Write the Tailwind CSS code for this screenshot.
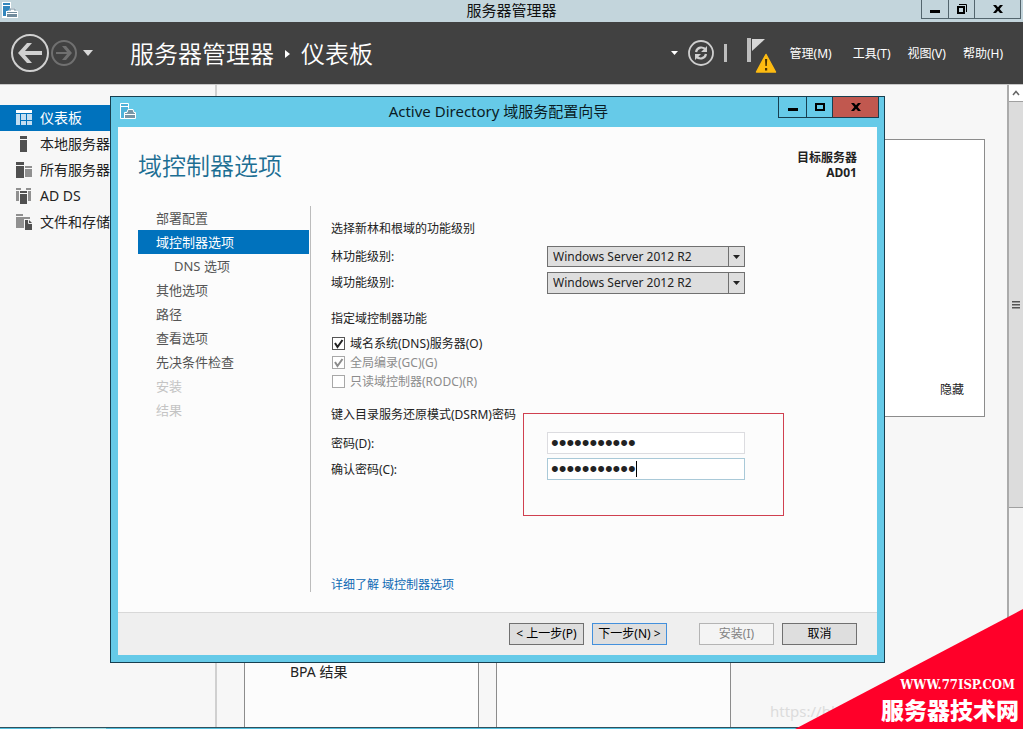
<!DOCTYPE html>
<html lang="zh-CN">
<head>
<meta charset="utf-8">
<meta name="viewport" content="width=device-width, initial-scale=1">
<title>服务器管理器</title>
<script src="https://cdn.jsdelivr.net/npm/@tailwindcss/browser@4"></script>
</head>
<body class="relative flex h-screen flex-col overflow-hidden bg-[#f7f7f7] font-['Noto_Sans','Noto_Sans_CJK_SC',sans-serif] text-xs text-[#222]">

<!-- Window title bar -->
<header class="grid h-[22px] shrink-0 grid-cols-[1fr_auto_1fr] bg-[#c3d5dc]">
  <svg class="ml-0.5 mt-0.5 size-4" viewBox="0 0 16 16" aria-hidden="true">
    <path d="M0 0h9v16H0z" fill="#fff"/><path d="M1 1h7v2H1zM1 4h7v4L5 9v5H1z" fill="#3286bd"/>
    <path d="M4 9h3l1-3h5l1 3h2v7H4z" fill="#fff"/><path d="M5 10h10v1H5zM5 12h10v3H5z" fill="#718b9c"/><path d="M8 9V7h5v2" stroke="#718b9c" fill="none"/>
  </svg>
  <h1 class="text-[15px] leading-[20px] text-[#111]">服务器管理器</h1>
  <div class="mr-0.5 flex h-[19px] justify-self-end border border-t-0 border-[#53656d]">
    <button type="button" aria-label="最小化" class="flex w-[27px] items-center justify-center border-r border-[#53656d]"><svg class="h-3 w-3" viewBox="0 0 12 12"><path d="M1 7h10v3H1z"/></svg></button>
    <button type="button" aria-label="还原" class="flex w-[26px] items-center justify-center border-r border-[#53656d]"><svg class="h-3 w-3" viewBox="0 0 12 12"><path d="M2 4h6v6H2z" fill="none" stroke="#000" stroke-width="2"/><path d="M3 1.500h7.500V9" fill="none" stroke="#000"/></svg></button>
    <button type="button" aria-label="关闭" class="flex w-[45px] items-center justify-center"><svg class="h-2.5 w-2.5" viewBox="0 0 10 10"><path d="M0 1h3l2 2.300l2-2.300h3L6.700 5L10 9H7L5 6.700L3 9H0l3.300-4z"/></svg></button>
  </div>
</header>

<!-- Command bar -->
<nav class="flex h-[62px] shrink-0 items-center bg-[#414141] text-white" aria-label="命令栏">
  <button type="button" aria-label="后退" class="ml-2.5"><svg class="size-10" viewBox="0 0 40 40"><circle cx="20" cy="20" r="18" fill="none" stroke="#d0d0d0" stroke-width="2"/><path d="M8 20l9-10h5l-7 8h17v4H15l7 8h-5z" fill="#d0d0d0"/></svg></button>
  <button type="button" aria-label="前进"><svg class="size-7" viewBox="0 0 28 28"><circle cx="14" cy="14" r="12" fill="none" stroke="#707070" stroke-width="2"/><path d="M22 14l-6-7h-4l5 6H6v2h11l-5 6h4z" fill="#707070"/></svg></button>
  <button type="button" aria-label="历史记录" class="ml-1"><svg class="h-[6px] w-3" viewBox="0 0 12 6"><path d="M1 0h10L6 6z" fill="#d8d8d8"/></svg></button>
  <ol class="ml-9 mt-0.5 flex flex-1 items-center text-[24px] font-[350] leading-8">
    <li>服务器管理器</li>
    <li aria-hidden="true" class="mx-[11px]"><svg class="h-2 w-[5px]" viewBox="0 0 5 8"><path d="M0 0l5 4l-5 4z" fill="#fff"/></svg></li>
    <li>仪表板</li>
  </ol>
  <button type="button" aria-label="更多"><svg class="h-1 w-[7px]" viewBox="0 0 7 4"><path d="M0 0h7L3.500 4z" fill="#fff"/></svg></button>
  <button type="button" aria-label="刷新" class="ml-2.5"><svg class="size-[26px]" viewBox="0 0 26 26"><circle cx="13" cy="13" r="12" fill="none" stroke="#cfcfcf" stroke-width="1.800"/><g fill="none" stroke="#cfcfcf" stroke-width="2.200"><path d="M8 12c1-5 7-6 10-2M18 14c-1 5-7 6-10 2"/></g><path d="M19 6v6h-6zM7 20v-6h6z" fill="#cfcfcf"/></svg></button>
  <span class="ml-[10px] h-[18px] w-[3px] bg-[#bdbdbd]"></span>
  <button type="button" aria-label="通知" class="ml-5 mt-1.5"><svg class="h-9 w-[30px]" viewBox="0 0 30 36"><path d="M0 0h4v24H0z" fill="#bdbdbd"/><path d="M5 1h13L5 13z" fill="#d6d6d6"/><path d="M19 16.500L28.500 34h-19z" fill="#fdbb11" stroke="#fdbb11" stroke-width="1.500" stroke-linejoin="round"/><path d="M18 21h2.200l-.4 7h-1.400zM18 30h2.200v2.500H18z" fill="#4a3200"/></svg></button>
  <div class="ml-[13px] mr-5 mt-0.5 flex gap-[17px] text-xs">
    <button type="button" class="mr-1">管理(M)</button>
    <button type="button">工具(T)</button>
    <button type="button">视图(V)</button>
    <button type="button">帮助(H)</button>
  </div>
</nav>

<!-- Dashboard behind the wizard -->
<main class="flex min-h-0 flex-1 border-t border-[#c8c8c8]">
  <aside class="w-[217px] shrink-0 border-r-2 border-[#d0d0d0] pt-5">
    <ul class="text-sm leading-[26px]">
      <li><a href="#" class="flex h-[26px] items-center gap-2 bg-[#0072bd] pl-4 text-white"><svg class="size-4" viewBox="0 0 16 16"><path d="M0 0h16v3H0z" fill="#fff"/><path d="M0 4h4v11H0zM5 4h5v6H5zM11 4h5v6h-5zM5 11h5v4H5zM11 11h5v4h-5z" fill="#c4def1"/></svg>仪表板</a></li>
      <li><a href="#" class="flex h-[26px] items-center gap-2 pl-4"><svg class="size-4" viewBox="0 0 16 16"><path d="M4 0h7v3H4zM4 4h7v12H4z" fill="#505050"/></svg>本地服务器</a></li>
      <li><a href="#" class="flex h-[26px] items-center gap-2 pl-4"><svg class="size-4" viewBox="0 0 16 16"><path d="M0 0h8v3H0zM0 4h8v12H0z" fill="#505050"/><path d="M9 4h7v2H9zM9 7h7v8H9z" fill="#909090"/></svg>所有服务器</a></li>
      <li><a href="#" class="flex h-[26px] items-center gap-2 pl-4"><svg class="size-4" viewBox="0 0 16 16"><path d="M0 0h5v2H0zM0 3h3v10H0zM10 0h5v2h-5zM12 3h3v10h-3z" fill="#909090"/><path d="M4 3h7v2H4zM4 6h7v10H4z" fill="#505050"/></svg>AD DS</a></li>
      <li><a href="#" class="flex h-[26px] items-center gap-2 pl-4"><svg class="size-4" viewBox="0 0 16 16"><path d="M0 0h7v2H0zM0 3h14v2H8v9H0z" fill="#909090"/><path d="M9 6h4l3 3v7H9z" fill="#505050"/><path d="M12.500 6v3.500H16" fill="none" stroke="#eee"/></svg>文件和存储服务</a></li>
    </ul>
  </aside>
  <section class="flex min-w-0 flex-1 flex-col pl-[27px] pr-[22px] pt-[54px]">
    <div class="flex h-[278px] shrink-0 items-end justify-end border border-[#8c8c8c] bg-white px-5 pb-[18px]">
      <button type="button">隐藏</button>
    </div>
    <div class="mt-8 grid min-h-0 flex-1 grid-cols-[235px_235px] gap-[17px]">
      <article class="flex flex-col border border-b-0 border-[#8c8c8c] bg-[#fcfcfc] pl-[45px] pt-[212px] text-sm leading-5"><h2>BPA 结果</h2></article>
      <article class="border border-b-0 border-[#8c8c8c] bg-[#fcfcfc]"></article>
    </div>
  </section>
  <div class="flex w-4 shrink-0 flex-col border-l-2 border-[#ababab] bg-[#f2f2f2]" aria-hidden="true">
    <div class="flex h-4 items-center justify-center bg-white"><svg class="h-2 w-2" viewBox="0 0 8 8"><path d="M1 6l3-3.500L7 6" fill="none" stroke="#666" stroke-width="1.500"/></svg></div>
    <div class="flex h-[407px] items-center justify-center border-y border-[#a0a0a0] bg-[#dcdcdc]"><svg class="h-2 w-2" viewBox="0 0 8 8"><path d="M0 0h8v1.500H0zM0 3h8v1.500H0zM0 6h8v1.500H0z" fill="#555"/></svg></div>
  </div>
</main>
<div class="h-0.5 shrink-0 border-t border-[#31505c] bg-[#55c0de]"><div class="ml-[51px] h-full w-[55px] bg-[#9fe0e8]"></div></div>

<!-- Site badge -->
<p class="absolute bottom-2 left-[770px] text-[15px] leading-5 text-[#dcdcdc]">https://bl</p>
<div class="absolute bottom-0 right-0 flex h-[120px] w-[228px] flex-col items-end justify-end bg-[#ff0029] text-white [clip-path:polygon(100%_0,100%_100%,0_100%)]">
  <span class="mr-2 font-['DejaVu_Serif_Condensed','DejaVu_Serif',serif] text-[13px] font-bold leading-4">WWW.77ISP.COM</span>
  <span class="mr-1 pb-0.5 text-[23px] font-black leading-[34px]">服务器技术网</span>
</div>

<!-- Wizard -->
<div role="dialog" aria-labelledby="wizard-title" class="absolute left-[110px] right-[138px] top-24 border border-[#173f50] bg-[#66cae8] px-[7px] pb-[7px]">
  <div class="-mr-0.5 grid h-[30px] grid-cols-[1fr_auto_1fr]">
    <svg class="ml-0.5 mt-1.5 size-4" viewBox="0 0 16 16" aria-hidden="true">
      <path d="M.5.500h8v5M.5.500v15H5M1 3.500h7" fill="none" stroke="#fff"/><path d="M1 1h7v2H1zM1 4h7v4L4 9v6H1z" fill="#4fb2da"/>
      <path d="M4.500 15.500v-6H7L8 6.500h5l1 3h1.500v6z" fill="#7795a5" stroke="#fff"/><path d="M5 11.500h10" stroke="#fff"/>
    </svg>
    <h2 id="wizard-title" class="text-[15px] leading-[28px] text-[#0a1c25]">Active Directory 域服务配置向导</h2>
    <div class="flex h-[21px] justify-self-end border border-t-0 border-[#173f50]">
      <button type="button" aria-label="最小化" class="flex w-7 items-center justify-center border-r border-[#173f50]"><svg class="h-3 w-3" viewBox="0 0 12 12"><path d="M1 7h10v3H1z"/></svg></button>
      <button type="button" aria-label="最大化" class="flex w-[26px] items-center justify-center border-r border-[#173f50]"><svg class="h-3 w-3" viewBox="0 0 12 12"><path d="M2 3h8v6H2z" fill="none" stroke="#000" stroke-width="2"/></svg></button>
      <button type="button" aria-label="关闭" class="flex w-[45px] items-center justify-center bg-[#c1584f]"><svg class="h-2.5 w-2.5" viewBox="0 0 10 10"><path d="M0 1h3l2 2.300l2-2.300h3L6.700 5L10 9H7L5 6.700L3 9H0l3.300-4z"/></svg></button>
    </div>
  </div>

  <form class="bg-[#fcfcfc]" onsubmit="return false">
    <div class="flex h-[79px] items-start justify-between pl-5 pr-5 pt-[23px]">
      <h3 class="text-[24px] font-[350] leading-[32px] text-[#1c6e93]">域控制器选项</h3>
      <p class="text-right font-bold leading-[15px]">目标服务器<br>AD01</p>
    </div>
    <div class="flex pl-5 pr-5">
      <ol class="mb-5 w-[173px] shrink-0 border-r border-[#bcbcbc] pr-px text-[13px] leading-6 text-[#555] *:h-6 *:pl-[18px]">
        <li>部署配置</li>
        <li class="bg-[#0072bd] text-white" aria-current="step">域控制器选项</li>
        <li><span class="pl-[18px]">DNS 选项</span></li>
        <li>其他选项</li>
        <li>路径</li>
        <li>查看选项</li>
        <li>先决条件检查</li>
        <li class="text-[#c4c4c4]">安装</li>
        <li class="text-[#c4c4c4]">结果</li>
      </ol>
      <div class="relative min-w-0 flex-1 pl-5 pt-3">
        <p class="leading-[22px]">选择新林和根域的功能级别</p>
        <div class="mt-1.5 grid grid-cols-[216px_198px] gap-y-[5px]">
          <label for="forest" class="leading-[21px]">林功能级别:</label>
          <div class="relative h-[21px]">
            <select id="forest" class="h-full w-full appearance-none border border-[#707070] bg-[#dedede] pl-[5px] text-xs"><option>Windows Server 2012 R2</option></select>
            <span class="pointer-events-none absolute inset-y-0 right-0 flex w-[17px] items-center justify-center border border-[#707070]"><svg class="h-1 w-[7px]" viewBox="0 0 7 4"><path d="M0 0h7L3.500 4z" fill="#222"/></svg></span>
          </div>
          <label for="domain" class="leading-[22px]">域功能级别:</label>
          <div class="relative h-[22px]">
            <select id="domain" class="h-full w-full appearance-none border border-[#707070] bg-[#dedede] pl-[5px] text-xs"><option>Windows Server 2012 R2</option></select>
            <span class="pointer-events-none absolute inset-y-0 right-0 flex w-[17px] items-center justify-center border border-[#707070]"><svg class="h-1 w-[7px]" viewBox="0 0 7 4"><path d="M0 0h7L3.500 4z" fill="#222"/></svg></span>
          </div>
        </div>
        <p class="mt-[14px] leading-[22px]">指定域控制器功能</p>
        <div class="mt-1 leading-[19px]">
          <label class="flex items-center gap-[5px]"><span class="ml-px grid size-[13px] *:col-start-1 *:row-start-1"><input type="checkbox" checked class="peer size-[13px] appearance-none border border-[#555] bg-white"><svg class="pointer-events-none invisible size-[13px] peer-checked:visible" viewBox="0 0 13 13"><path d="M3 6l2.500 4L10.500 3" fill="none" stroke="#222" stroke-width="2"/></svg></span>域名系统(DNS)服务器(O)</label>
          <label class="flex items-center gap-[5px] text-[#8c8c8c]"><span class="ml-px grid size-[13px] *:col-start-1 *:row-start-1"><input type="checkbox" checked disabled class="peer size-[13px] appearance-none border border-[#a8a8a8] bg-white"><svg class="pointer-events-none invisible size-[13px] peer-checked:visible" viewBox="0 0 13 13"><path d="M3 6l2.500 4L10.500 3" fill="none" stroke="#8c8c8c" stroke-width="2"/></svg></span>全局编录(GC)(G)</label>
          <label class="flex items-center gap-[5px] text-[#8c8c8c]"><span class="ml-px grid size-[13px]"><input type="checkbox" disabled class="size-[13px] appearance-none border border-[#a8a8a8] bg-white"></span>只读域控制器(RODC)(R)</label>
        </div>
        <p class="mt-[13px] leading-[22px]">键入目录服务还原模式(DSRM)密码</p>
        <div class="mt-1.5 grid auto-rows-[22px] grid-cols-[216px_198px] gap-y-1 leading-6">
          <label for="pw">密码(D):</label>
          <input id="pw" type="password" value="Passw0rd123" class="h-[22px] w-full border border-[#dcdce0] bg-white px-[3px] font-['Liberation_Sans',sans-serif] text-[22px] leading-5 text-[#222]">
          <label for="pw2">确认密码(C):</label>
          <div class="relative">
            <input id="pw2" type="password" value="Passw0rd123" class="block h-[22px] w-full border border-[#a9c9d8] bg-white px-[3px] font-['Liberation_Sans',sans-serif] text-[22px] leading-5 text-[#222]">
            <span class="absolute left-[89px] top-[3px] h-4 w-px bg-black"></span>
          </div>
        </div>
        <div class="pointer-events-none absolute left-[212px] top-[207px] h-[103px] w-[261px] border border-[#d04050]"></div>
        <p class="mt-[94px] pb-4 leading-[22px]"><a href="#" class="text-[#0f6ab4]">详细了解 域控制器选项</a></p>
      </div>
    </div>
    <div class="flex justify-end gap-2 border-t border-[#d8d8d8] bg-[#efefef] px-5 py-[10px] *:h-[22px] *:w-[75px] *:border *:text-xs *:leading-5 *:whitespace-nowrap">
      <button type="button" class="border-[#707070] bg-[#dedede] text-black">&lt; 上一步(P)</button>
      <button type="submit" class="border-[#4390dc] bg-[#dedede] text-black">下一步(N) &gt;</button>
      <button type="button" disabled class="ml-6 border-[#b4b4b4] bg-[#f4f4f4] text-[#838383]">安装(I)</button>
      <button type="button" class="border-[#707070] bg-[#dedede] text-black">取消</button>
    </div>
  </form>
</div>
</body>
</html>
